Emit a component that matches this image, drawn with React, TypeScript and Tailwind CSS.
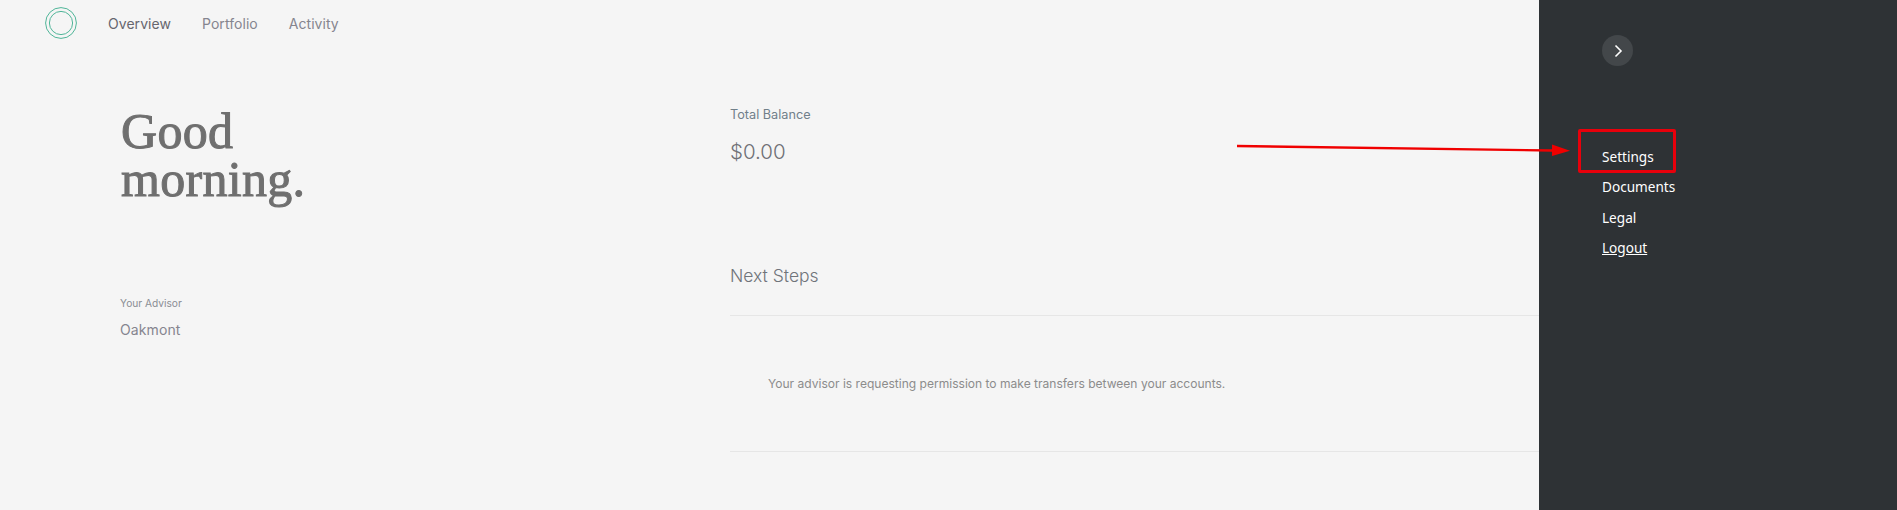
export default function App() {
  return (
    <div className="relative flex h-[510px] w-[1897px] overflow-hidden bg-[#f5f5f5] font-['Inter',sans-serif]">
      <main className="flex min-w-0 flex-1 flex-col">
        <header className="flex h-[46px] items-center pl-[45px]">
          <svg width="32" height="32" viewBox="0 0 32 32" fill="none" stroke="#4fb598" strokeWidth="1">
            <circle cx="16" cy="16" r="15.4" />
            <circle cx="16" cy="16" r="11.6" />
          </svg>
          <nav className="ml-[31px] flex gap-[31px] text-[14px] tracking-[0.05px] text-[#85858f]">
            <span className="text-[#66666e]">Overview</span>
            <span>Portfolio</span>
            <span>Activity</span>
          </nav>
        </header>
        <div className="flex flex-1 pl-[120px] pt-[61px]">
          <section className="w-[610px] shrink-0">
            <h1 className="ml-[1px] font-['Liberation_Serif',serif] text-[50px] font-normal leading-[48px] tracking-[0.3px] text-[#6f6f6f] [-webkit-text-stroke:1px_#6f6f6f]">
              Good
              <br />
              morning.
            </h1>
            <p className="mt-[92px] text-[10.2px] leading-[16px] text-[#8a8d94]">Your Advisor</p>
            <p className="mt-[9px] text-[14px] leading-[20px] tracking-[0.1px] text-[#85858f]">Oakmont</p>
          </section>
          <section className="flex-1">
            <p className="mt-[-1px] text-[12.7px] leading-[18px] text-[#71808a]">Total Balance</p>
            <p className="mt-[14px] text-[20.5px] leading-[28px] font-light text-[#6f7076]">$0.00</p>
            <h2 className="mt-[97px] text-[17.5px] leading-[26px] font-light text-[#70747a]">Next Steps</h2>
            <div className="mt-[26px] h-[137px] border-y border-[#e6e6e6] pl-[38px] pt-[59px] text-[12.05px] leading-[18px] text-[#8c8c8c]">
              Your advisor is requesting permission to make transfers between your accounts.
            </div>
          </section>
        </div>
      </main>
      <aside className="flex w-[358px] shrink-0 flex-col bg-[#2e3235] pl-[63px] pt-[35px] font-['Noto_Sans',sans-serif] text-[13.6px] text-white">
        <button className="flex h-[31px] w-[31px] items-center justify-center rounded-full bg-[#43474a]">
          <svg width="14" height="14" viewBox="0 0 14 14" fill="none" stroke="#ffffff" strokeWidth="1.6">
            <path d="M4.5 1.5 L10 7 L4.5 12.5" />
          </svg>
        </button>
        <ul className="mt-[81px] flex flex-col gap-[10.4px] leading-[20px]">
          <li>Settings</li>
          <li>Documents</li>
          <li>Legal</li>
          <li className="underline">Logout</li>
        </ul>
      </aside>
      <div className="absolute left-[1578px] top-[129px] h-[44px] w-[98px] rounded-[2px] border-[3px] border-[#e8000b]" />
      <svg className="absolute left-[1230px] top-[135px]" width="345" height="25" viewBox="0 0 345 25" fill="none">
        <path d="M7 11 L322 15.5" stroke="#f00000" strokeWidth="2.4" />
        <path d="M322 9.5 L340 15.7 L322 21 Z" fill="#f00000" />
      </svg>
    </div>
  );
}
